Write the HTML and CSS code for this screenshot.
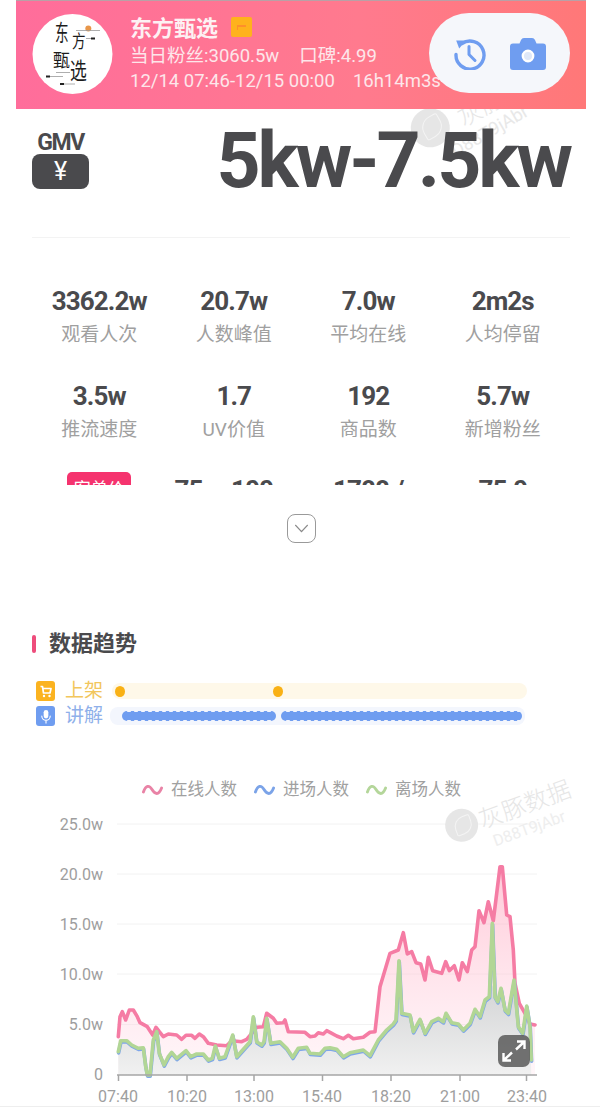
FILE: index.html
```html
<!DOCTYPE html>
<html lang="zh">
<head>
<meta charset="utf-8">
<title>东方甄选</title>
<link rel="stylesheet" href="styles.css">
</head>
<body>
<main class="page">
  <header class="room">
    <svg class="avatar" viewBox="0 0 81 80" role="img" aria-label="东方甄选">
      <circle cx="40.5" cy="40" r="40" fill="#fff"/>
      <text class="logo-char" transform="translate(23 27) scale(.85 1.4)">东</text>
      <text class="logo-char" transform="translate(40 33.500) scale(.85 1.15)">方</text>
      <text class="logo-char" transform="translate(21 53) scale(1.05 1.15)">甄</text>
      <text class="logo-char" transform="translate(38 65) scale(1.05 1.45)">选</text>
      <circle cx="56.300" cy="14.500" r="3" fill="#e8964a"/>
      <path d="M44 16.500H68M54 24.500H63M24 58.500H38M14 62.500H31M28 70H43" stroke="#999" stroke-width=".8" fill="none"/>
      <path d="M59 24.500H63M14 62.500H18M28 70H32" stroke="#222" stroke-width="1.800" fill="none"/>
    </svg>
    <div class="room-info">
      <div class="room-title">
        <h1>东方甄选</h1>
        <span class="room-badge"><span class="room-badge-mark"></span></span>
      </div>
      <p class="room-meta">当日粉丝:3060.5w<span class="room-sep room-sep-wide">口碑:4.99</span></p>
      <p class="room-meta">12/14 07:46-12/15 00:00<span class="room-sep">16h14m3s</span></p>
    </div>
    <div class="room-actions">
      <svg class="icon-history" viewBox="0 0 34 32">
        <path d="M9 5.6A14 14 0 1 1 3 16.5" fill="none" stroke="#6f9df0" stroke-width="3.4" stroke-linecap="round"/>
        <path d="M3.2 2.4 12.8 2.6 6.2 10.4Z" fill="#6f9df0"/>
        <path d="M16 8.5V16.5L22 22.5" fill="none" stroke="#6f9df0" stroke-width="3" stroke-linecap="round" stroke-linejoin="round"/>
      </svg>
      <svg class="icon-camera" viewBox="0 0 36 32">
        <path d="M3 5.5H9.5L11 2Q11.800 0 14 0H22Q24.200 0 25 2L26.500 5.500H33Q36 5.500 36 8.500V29Q36 32 33 32H3Q0 32 0 29V8.500Q0 5.500 3 5.500Z" fill="#6f9df0"/>
        <circle cx="18" cy="18" r="5.200" fill="#dfe8f8" stroke="#fff" stroke-width="2.400"/>
      </svg>
    </div>
  </header>

  <section class="gmv">
    <div class="gmv-side">
      <div class="gmv-label">GMV</div>
      <div class="gmv-badge">¥</div>
    </div>
    <div class="gmv-value">5kw-7.5kw</div>
    <div class="watermark watermark-top" aria-hidden="true">
      <span class="wm-logo"></span>
      <span class="wm-text"><span class="wm-name">灰豚数据</span><span class="wm-id">D88T9jAbr</span></span>
    </div>
  </section>

  <section class="stats">
    <div class="stat"><strong>3362.2w</strong><span>观看人次</span></div>
    <div class="stat"><strong>20.7w</strong><span>人数峰值</span></div>
    <div class="stat"><strong>7.0w</strong><span>平均在线</span></div>
    <div class="stat"><strong>2m2s</strong><span>人均停留</span></div>
    <div class="stat"><strong>3.5w</strong><span>推流速度</span></div>
    <div class="stat"><strong>1.7</strong><span>UV价值</span></div>
    <div class="stat"><strong>192</strong><span>商品数</span></div>
    <div class="stat"><strong>5.7w</strong><span>新增粉丝</span></div>
    <div class="stat"><em class="stat-tag">客单价</em></div>
    <div class="stat stat-shift"><strong>75 - 100</strong></div>
    <div class="stat"><strong>1788 /</strong></div>
    <div class="stat"><strong>75.0</strong></div>
  </section>

  <div class="expand">
    <span class="expand-btn">
      <svg viewBox="0 0 16 10" class="expand-chevron"><path d="M1.500 1.500 8 8.500 14.500 1.500" fill="none" stroke="#8a8a8a" stroke-width="1.500" stroke-linecap="round" stroke-linejoin="round"/></svg>
    </span>
  </div>

  <h2 class="section-title">数据趋势</h2>

  <div class="timeline">
    <div class="timeline-row row-shelf">
      <span class="tl-icon tl-icon-shelf">
        <svg viewBox="0 0 14 14"><path d="M1.500 2H3.500L4.500 8.500H11L12 4H4" fill="none" stroke="#fff" stroke-width="1.700" stroke-linejoin="round"/><circle cx="5" cy="11.500" r="1.200" fill="#fff"/><circle cx="10.500" cy="11.500" r="1.200" fill="#fff"/></svg>
      </span>
      <span class="tl-label">上架</span>
      <div class="track track-shelf"><i class="dot"></i><i class="dot"></i></div>
    </div>
    <div class="timeline-row row-talk">
      <span class="tl-icon tl-icon-talk">
        <svg viewBox="0 0 14 16"><rect x="4.500" y="1" width="5" height="9" rx="2.500" fill="#fff"/><path d="M2.500 7.500A4.500 4.500 0 0 0 11.500 7.500M7 12V15" fill="none" stroke="#fff" stroke-width="1.200" stroke-linecap="round"/></svg>
      </span>
      <span class="tl-label">讲解</span>
      <div class="track track-talk"><i class="seg seg-a"></i><i class="seg seg-b"></i></div>
    </div>
  </div>

  <ul class="legend">
    <li><svg viewBox="0 0 22 14"><path d="M1.500 9C4 2 7.500 1.500 10.500 6.500S17.500 13 20.500 5" fill="none" stroke="#e983a6" stroke-width="3" stroke-linecap="round"/></svg>在线人数</li>
    <li><svg viewBox="0 0 22 14"><path d="M1.500 9C4 2 7.500 1.500 10.500 6.500S17.500 13 20.500 5" fill="none" stroke="#7ba3e8" stroke-width="3" stroke-linecap="round"/></svg>进场人数</li>
    <li><svg viewBox="0 0 22 14"><path d="M1.500 9C4 2 7.500 1.500 10.500 6.500S17.500 13 20.500 5" fill="none" stroke="#b4d69a" stroke-width="3" stroke-linecap="round"/></svg>离场人数</li>
  </ul>

  <div class="chart">
    <svg class="chart-svg" viewBox="0 0 600 307">
      <defs>
        <linearGradient id="fillOnline" x1="0" y1="0" x2="0" y2="1">
          <stop offset="0" stop-color="#ff9db8" stop-opacity=".55"/>
          <stop offset="1" stop-color="#ffe6ee" stop-opacity=".35"/>
        </linearGradient>
        <linearGradient id="fillLeave" gradientUnits="userSpaceOnUse" x1="0" y1="200" x2="0" y2="275">
          <stop offset="0" stop-color="#d8d9da"/>
          <stop offset="1" stop-color="#f1f1f1"/>
        </linearGradient>
        <polyline id="lineLeave" points="118.300,251.700 120.700,240.700 126.700,240.700 131.700,245 138.300,248.300 143.300,247.700 145.700,266.700 147.300,275 150,275 153.300,240 156.700,231.700 159.300,253.300 164,265 168.300,256.700 171.700,252.300 176.700,258.300 186,250.700 190.700,256.700 196.700,254 203.300,254 208.300,260 212.300,258.300 215.300,246 219.300,258.300 225,256.700 232.700,235 236.700,256.700 250,241.700 253.300,216.700 256.700,241.700 261.700,245 264,241.700 266.700,218.300 270.700,243.300 280,241.700 286.700,248.300 292.700,257.300 298.300,248.300 306.700,247.300 310,253.300 320,254 325,248.300 330,247.700 336.700,249.300 343.300,256.700 350,252.700 363.300,250 370,255.700 378.300,240 386.700,230 393.300,224 396,220 399,160.700 401.700,213.300 410,215 413.300,231.700 420,219.300 425,233.300 431.700,221.700 438.300,218.300 443.300,221.700 446,213.300 451.700,222.700 458.300,224 463.300,230 470,223.300 475,209.300 480,216.700 485,200 489.300,196.700 492.300,123.300 495,196.700 497.700,201.700 501,188.300 505,210 508.300,213.300 514,180 518.300,226.700 522.700,233.300 526.700,206 530,226.700 531.300,260"/>
      </defs>

      <g class="grid">
        <line x1="117" y1="24" x2="537" y2="24"/>
        <line x1="117" y1="74" x2="537" y2="74"/>
        <line x1="117" y1="124" x2="537" y2="124"/>
        <line x1="117" y1="174" x2="537" y2="174"/>
        <line x1="117" y1="224.500" x2="537" y2="224.500"/>
      </g>

      <polygon fill="url(#fillOnline)" points="118.300,275 118.300,236.700 120,216.700 122.300,211.700 125.700,220 129.300,210 133.300,210 137.300,216.700 140,222.700 147.300,226.700 152.700,235 156,227.300 159.300,231.700 163.300,236.700 168.300,234 176.700,235 181.700,239.300 186,235.300 191.700,235.300 195,238.300 199.300,234 203.300,236.700 208.300,243.300 216.700,245 226.700,245.700 231.700,240.700 241.700,241.700 246.700,239.300 256.700,227.300 263.300,226.700 266.700,213.300 273.300,218.300 276.700,223.300 283.300,222.700 285,220 288.300,231.700 305,232.300 310,236.700 315,236 318.300,232.700 323.300,234 326.700,230.700 330,232.300 336.700,236 343.300,238.700 348.300,235.300 353.300,238.700 363.300,237.300 370,232.300 375,231.700 380,186.700 385,170 390,153.300 398.300,150 403.300,132.700 407.300,154 411.700,151.700 416,162.700 420.700,164 425,180 428.300,157.300 432.700,170.700 441.700,173.300 445.700,161.700 449.300,170.700 454.300,165.700 459,180 462.300,162.700 467.300,171.700 471.700,150 475,146.700 479,110.700 484,122.700 488.300,101.700 493.300,120.700 500,66.700 502.300,66.700 506.700,115 510,116.700 513.300,150 515,183.300 519.300,203.300 525,213.300 530,224 535,225 535,275"/>
      <polygon fill="url(#fillLeave)" points="118.300,275 118.300,251.700 120.700,240.700 126.700,240.700 131.700,245 138.300,248.300 143.300,247.700 145.700,266.700 147.300,275 150,275 153.300,240 156.700,231.700 159.300,253.300 164,265 168.300,256.700 171.700,252.300 176.700,258.300 186,250.700 190.700,256.700 196.700,254 203.300,254 208.300,260 212.300,258.300 215.300,246 219.300,258.300 225,256.700 232.700,235 236.700,256.700 250,241.700 253.300,216.700 256.700,241.700 261.700,245 264,241.700 266.700,218.300 270.700,243.300 280,241.700 286.700,248.300 292.700,257.300 298.300,248.300 306.700,247.300 310,253.300 320,254 325,248.300 330,247.700 336.700,249.300 343.300,256.700 350,252.700 363.300,250 370,255.700 378.300,240 386.700,230 393.300,224 396,220 399,205 401.700,213.300 410,215 413.300,231.700 420,219.300 425,233.300 431.700,221.700 438.300,218.300 443.300,221.700 446,213.300 451.700,222.700 458.300,224 463.300,230 470,223.300 475,209.300 480,216.700 485,200 489.300,196.700 492.300,185 495,196.700 497.700,201.700 501,188.300 505,210 508.300,213.300 514,195 518.300,226.700 522.700,233.300 526.700,206 530,226.700 531.300,275"/>

      <polyline class="line line-online" points="118.300,236.700 120,216.700 122.300,211.700 125.700,220 129.300,210 133.300,210 137.300,216.700 140,222.700 147.300,226.700 152.700,235 156,227.300 159.300,231.700 163.300,236.700 168.300,234 176.700,235 181.700,239.300 186,235.300 191.700,235.300 195,238.300 199.300,234 203.300,236.700 208.300,243.300 216.700,245 226.700,245.700 231.700,240.700 241.700,241.700 246.700,239.300 256.700,227.300 263.300,226.700 266.700,213.300 273.300,218.300 276.700,223.300 283.300,222.700 285,220 288.300,231.700 305,232.300 310,236.700 315,236 318.300,232.700 323.300,234 326.700,230.700 330,232.300 336.700,236 343.300,238.700 348.300,235.300 353.300,238.700 363.300,237.300 370,232.300 375,231.700 380,186.700 385,170 390,153.300 398.300,150 403.300,132.700 407.300,154 411.700,151.700 416,162.700 420.700,164 425,180 428.300,157.300 432.700,170.700 441.700,173.300 445.700,161.700 449.300,170.700 454.300,165.700 459,180 462.300,162.700 467.300,171.700 471.700,150 475,146.700 479,110.700 484,122.700 488.300,101.700 493.300,120.700 500,66.700 502.300,66.700 506.700,115 510,116.700 513.300,150 515,183.300 519.300,203.300 525,213.300 530,224 535,225"/>
      <use href="#lineLeave" class="line line-enter" transform="translate(0.300 1.200)"/>
      <use href="#lineLeave" class="line line-leave"/>

      <g class="axis">
        <line x1="117" y1="275" x2="537" y2="275"/>
        <line x1="118.500" y1="275" x2="118.500" y2="281"/>
        <line x1="187" y1="275" x2="187" y2="281"/>
        <line x1="254" y1="275" x2="254" y2="281"/>
        <line x1="322.500" y1="275" x2="322.500" y2="281"/>
        <line x1="391" y1="275" x2="391" y2="281"/>
        <line x1="460" y1="275" x2="460" y2="281"/>
        <line x1="526.500" y1="275" x2="526.500" y2="281"/>
      </g>
      <g class="y-labels">
        <text x="103" y="29.500">25.0w</text>
        <text x="103" y="79.500">20.0w</text>
        <text x="103" y="129.500">15.0w</text>
        <text x="103" y="179.500">10.0w</text>
        <text x="103" y="230">5.0w</text>
        <text x="103" y="280">0</text>
      </g>
      <g class="x-labels">
        <text x="118" y="302">07:40</text>
        <text x="187" y="302">10:20</text>
        <text x="254" y="302">13:00</text>
        <text x="322" y="302">15:40</text>
        <text x="391" y="302">18:20</text>
        <text x="460" y="302">21:00</text>
        <text x="527" y="302">23:40</text>
      </g>
    </svg>
    <div class="watermark watermark-chart" aria-hidden="true">
      <span class="wm-logo"></span>
      <span class="wm-text"><span class="wm-name">灰豚数据</span><span class="wm-id">D88T9jAbr</span></span>
    </div>
    <span class="fullscreen">
      <svg viewBox="0 0 32 32"><path d="M19 6.500H26.500V14M26 7 18 14.500M13 25.500H5.500V18M6 25 14 17.500" fill="none" stroke="#fff" stroke-width="2.400"/></svg>
    </span>
  </div>
</main>
</body>
</html>
```
FILE: styles.css
```css
* { box-sizing: border-box; }
html, body { margin: 0; padding: 0; background: #fff; }
body { font-family: Roboto, "Noto Sans CJK SC", sans-serif; color: #444; }
.page { width: 600px; height: 1107px; overflow: hidden; border-bottom: 1px solid #eee; }

.room {
  position: relative;
  z-index: 2;
  margin: 0 14px 0 16px;
  height: 109px;
  display: flex;
  align-items: flex-start;
  padding: 13px 0 0 16px;
  gap: 17px;
  color: #fff;
  background: linear-gradient(90deg, #ff6d9b 0%, #ff7a8e 60%, #ff7878 100%);
  border-top: 1px solid #b9a0a6;
}
.avatar { width: 81px; height: 80px; flex: none; }
.logo-char { font-size: 16px; font-family: "Noto Sans CJK SC", sans-serif; fill: #1c1c1c; }
.room-info { padding-top: 0; }
.room-title { display: flex; align-items: center; gap: 13px; height: 30px; }
.room-title h1 { margin: 0; font-size: 22px; line-height: 30px; font-weight: 700; color: #fdf1f3; }
.room-badge { width: 21px; height: 20px; margin-top: -4px; background: #ffb21c; border-radius: 2px; display: flex; align-items: center; justify-content: center; }
.room-badge-mark { width: 9px; height: 5px; border-top: 2px solid #ff8f2a; border-left: 1px solid #ff8f2a; }
.room-meta { margin: 0; font-size: 18.500px; line-height: 25px; color: #fde6ea; white-space: nowrap; }
.room-sep { margin-left: 18px; }
.room-sep-wide { margin-left: 20px; }
.room-actions {
  position: absolute;
  left: 413px;
  top: 12px;
  width: 141px;
  height: 80px;
  border-radius: 40px;
  background: #f5f7fb;
  display: flex;
  align-items: center;
  gap: 23px;
  padding: 1px 0 0 24px;
}
.icon-history { width: 34px; height: 32px; }
.icon-camera { width: 36px; height: 32px; }

.gmv {
  position: relative;
  margin: 0 30px 0 32px;
  height: 129px;
  display: flex;
  justify-content: space-between;
  border-bottom: 1px solid #f3f3f3;
}
.gmv-side { padding-top: 21px; width: 57px; }
.gmv-label { font-size: 23px; line-height: 25px; font-weight: 700; text-align: center; letter-spacing: -1.500px; color: #4a4a4d; }
.gmv-badge { margin-top: -1px; height: 35px; line-height: 35px; border-radius: 8px; background: #4a4a4d; color: #fff; text-align: center; font-size: 25px; }
.gmv-value { position: relative; z-index: 1; font-size: 77px; line-height: 100px; margin-top: 2px; font-weight: 700; letter-spacing: -3px; color: #4a4a4d; white-space: nowrap; }

.watermark { position: absolute; display: flex; align-items: flex-start; gap: 2px; color: #e6e6e6; pointer-events: none; }
.wm-logo { position: relative; width: 33px; height: 33px; border-radius: 50%; background: #e6e6e6; flex: none; }
.wm-logo::after { content: ""; position: absolute; left: 28%; top: 24%; width: 48%; height: 48%; border-radius: 60% 10% 60% 10%; border: 1.500px solid #f4f4f4; }
.wm-text { display: flex; flex-direction: column; padding-top: 5px; }
.wm-name { font-size: 24px; line-height: 28px; font-weight: 300; white-space: nowrap; }
.wm-id { font-size: 16px; line-height: 20px; padding-left: 6px; color: #eee; white-space: nowrap; }
.watermark-top { left: 379px; top: -1px; transform: rotate(-30deg); transform-origin: 20px 20px; }
.watermark-top .wm-logo { width: 39px; height: 39px; }
.watermark-top .wm-text { margin-left: -14px; padding-top: 14px; }
.watermark-top .wm-name { padding-left: 22px; }
.watermark-top .wm-id { padding-left: 0; font-size: 18px; color: #e8e8e8; }
.watermark-chart { left: 445px; top: 9px; transform: rotate(-20deg); transform-origin: 16px 16px; }

.stats {
  margin: 49px 30px 0 32px;
  height: 198px;
  overflow: hidden;
  display: grid;
  grid-template-columns: repeat(4, 134.500px);
  grid-auto-rows: 95px;
}
.stat { display: flex; flex-direction: column; align-items: center; }
.stat strong { font-size: 26px; line-height: 28px; font-weight: 700; letter-spacing: -.9px; color: #4a4a4d; white-space: pre; }
.stat span { margin-top: 7px; font-size: 19px; line-height: 26px; color: #a0a0a0; }
.stat-tag { margin-top: -10px; width: 64px; height: 34px; border-radius: 5px; background: #f5336e; color: #fff; font-size: 17px; line-height: 34px; text-align: center; font-style: normal; white-space: nowrap; overflow: hidden; }
.stat:nth-child(n+9) strong { margin-top: -6px; }
.stats .stat:nth-child(n+9) { padding-top: 5px; }
.stat-shift { padding-right: 20px; word-spacing: 4px; }

.expand { margin-top: 29px; display: flex; justify-content: center; padding-left: 2px; }
.expand-btn { width: 29px; height: 29px; border: 1.500px solid #9a9a9a; border-radius: 8px; display: flex; align-items: center; justify-content: center; }
.expand-chevron { width: 15px; height: 9px; }

.section-title {
  margin: 87px 0 0 32px;
  padding-left: 17px;
  position: relative;
  font-size: 22px;
  line-height: 28px;
  font-weight: 700;
  color: #4a4a4d;
}
.section-title::before { content: ""; position: absolute; left: 0; top: 5px; width: 3.500px; height: 18px; border-radius: 2px; background: #ee4d7c; }

.timeline { margin: 23px 0 0 36px; display: flex; flex-direction: column; gap: 5px; }
.timeline-row { display: flex; align-items: center; height: 20px; }
.tl-icon { width: 19px; height: 20px; border-radius: 3px; flex: none; display: flex; align-items: center; justify-content: center; }
.tl-icon svg { width: 14px; height: 15px; }
.tl-icon-shelf { background: #fbb320; }
.tl-icon-talk { background: #6f9df0; }
.tl-label { margin-left: 10px; font-size: 19px; line-height: 20px; white-space: nowrap; }
.row-shelf .tl-label { color: #f2c65c; }
.row-talk .tl-label { color: #8fb0ea; }
.track { display: flex; align-items: center; border-radius: 8px; }
.track-shelf { margin-left: 9px; width: 415px; height: 16px; padding-left: 3px; gap: 148px; background: #fef8e9; }
.track-talk { margin-left: 7px; width: 415px; height: 18px; padding-left: 12px; gap: 5px; background: #f3f6fd; }
.dot { width: 10px; height: 11px; border-radius: 50%; background: #f9b115; }
.seg {
  display: block;
  height: 10px;
  border-radius: 5px;
  background: radial-gradient(circle at 50% 50%, #6f9df0 4.600px, transparent 5px) 0 0 / 7px 10px repeat-x,
    linear-gradient(#6f9df0, #6f9df0) 0 1px / 100% 8px no-repeat;
}
.seg-a { width: 154px; }
.seg-b { width: 241px; }

.legend { list-style: none; margin: 54px 0 0 142px; padding: 0; height: 20px; display: flex; gap: 17px; }
.legend li { display: flex; align-items: center; gap: 8px; font-size: 16.500px; line-height: 20px; color: #a0a0a0; white-space: nowrap; }
.legend svg { width: 21px; height: 14px; }

.chart { position: relative; height: 307px; }
.chart-svg { display: block; width: 600px; height: 307px; }
.grid line { stroke: #f2f2f2; stroke-width: 1; }
.axis line { stroke: #a6a6a6; stroke-width: 1.500; }
.line { fill: none; stroke-width: 3.600; stroke-linejoin: round; stroke-linecap: round; }
.line-online { stroke: #f57ca4; }
.line-enter { stroke: #7ea6ea; }
.line-leave { stroke: #b2d695; }
.y-labels text { font-size: 16px; fill: #9e9e9e; text-anchor: end; }
.x-labels text { font-size: 16px; fill: #9e9e9e; text-anchor: middle; }
.fullscreen { position: absolute; left: 498px; top: 235px; width: 32px; height: 32px; border-radius: 7px; background: rgba(95, 95, 95, .88); display: flex; }
.fullscreen svg { width: 32px; height: 32px; }
```
